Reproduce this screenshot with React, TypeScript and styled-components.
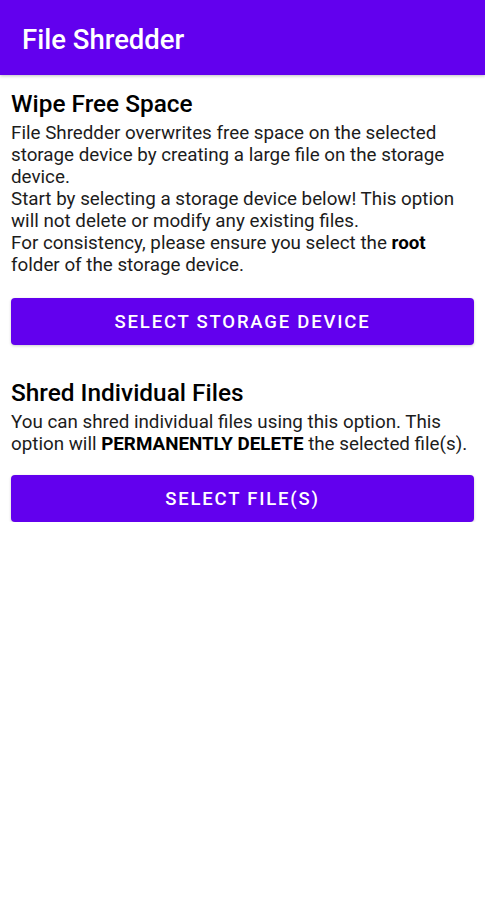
import React from "react";
import styled, { createGlobalStyle } from "styled-components";

const GlobalStyle = createGlobalStyle`
  html, body {
    margin: 0;
    padding: 0;
    background: #ffffff;
    font-family: Roboto, "Noto Sans", sans-serif;
  }
`;

const AppBar = styled.header`
  display: flex;
  align-items: center;
  height: 75px;
  padding: 4px 22px 0 22px;
  box-sizing: border-box;
  background-color: #6200ee;
  box-shadow: 0 1px 3px rgba(0, 0, 0, 0.25);
`;

const AppTitle = styled.h1`
  margin: 0;
  color: #ffffff;
  font-size: 27.5px;
  font-weight: 500;
`;

const Content = styled.main`
  display: flex;
  flex-direction: column;
  padding: 15px 11px 0 11px;
`;

const Section = styled.section<{ spacing?: number }>`
  display: flex;
  flex-direction: column;
  margin-bottom: ${(p) => p.spacing ?? 0}px;
`;

const Heading = styled.h2`
  margin: 0 0 4px 0;
  font-size: 24.4px;
  font-weight: 500;
  color: #000000;
  line-height: 28px;
`;

const Body = styled.p`
  margin: 0;
  font-size: 18.8px;
  line-height: 22px;
  color: #1c1c1c;

  b {
    font-weight: 700;
    color: #000;
  }
`;

const ActionButton = styled.button<{ top: number }>`
  display: flex;
  align-items: center;
  justify-content: center;
  width: 100%;
  height: 47px;
  margin-top: ${(p) => p.top}px;
  border: none;
  border-radius: 4px;
  background-color: #6200ee;
  color: #ffffff;
  font-family: Roboto, "Noto Sans", sans-serif;
  font-size: 18.5px;
  font-weight: 500;
  letter-spacing: 1.8px;
  text-transform: uppercase;
  box-shadow: 0 1px 3px rgba(0, 0, 0, 0.2);
  cursor: pointer;
`;

const App: React.FC = () => {
  return (
    <>
      <GlobalStyle />
      <AppBar>
        <AppTitle>File Shredder</AppTitle>
      </AppBar>
      <Content>
        <Section spacing={34}>
          <Heading>Wipe Free Space</Heading>
          <Body>
            File Shredder overwrites free space on the selected storage device
            by creating a large file on the storage device.
            <br />
            Start by selecting a storage device below! This option will not
            delete or modify any existing files.
            <br />
            For consistency, please ensure you select the <b>root</b> folder of
            the storage device.
          </Body>
          <ActionButton top={22}>Select Storage Device</ActionButton>
        </Section>
        <Section>
          <Heading>Shred Individual Files</Heading>
          <Body>
            You can shred individual files using this option. This option will{" "}
            <b>PERMANENTLY DELETE</b> the selected file(s).
          </Body>
          <ActionButton top={20}>Select File(s)</ActionButton>
        </Section>
      </Content>
    </>
  );
};

export default App;
